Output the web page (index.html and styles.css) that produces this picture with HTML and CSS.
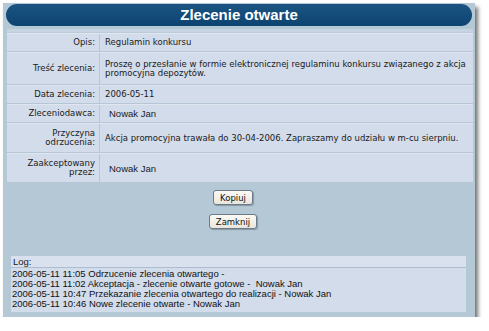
FILE: index.html
```html
<!DOCTYPE html>
<html lang="pl">
<head>
    <meta charset="UTF-8">
    <meta name="viewport" content="width=device-width, initial-scale=1.0">
    <title>Zlecenie otwarte</title>
    <link rel="stylesheet" href="styles.css">
</head>

<body>
    <div class="panel">
        <h1 class="title">Zlecenie otwarte</h1>

        <div class="details">
            <div class="row row-short">
                <div class="label">Opis:</div>
                <div class="value">Regulamin konkursu</div>
            </div>
            <div class="row row-tall">
                <div class="label">Treść zlecenia:</div>
                <div class="value">Proszę o przesłanie w formie elektronicznej regulaminu konkursu związanego z akcja promocyjna depozytów.</div>
            </div>
            <div class="row row-short">
                <div class="label">Data zlecenia:</div>
                <div class="value">2006-05-11</div>
            </div>
            <div class="row row-short">
                <div class="label">Zleceniodawca:</div>
                <div class="value person">Nowak Jan</div>
            </div>
            <div class="row row-mid">
                <div class="label">Przyczyna<br>odrzucenia:</div>
                <div class="value">Akcja promocyjna trawała do 30-04-2006. Zapraszamy do udziału w m-cu sierpniu.</div>
            </div>
            <div class="row row-mid">
                <div class="label">Zaakceptowany<br>przez:</div>
                <div class="value person">Nowak Jan</div>
            </div>
        </div>

        <div class="actions">
            <button type="button" class="btn">Kopiuj</button>
            <button type="button" class="btn">Zamknij</button>
        </div>

        <div class="log">
            <div class="log-head">Log:</div>
            <div class="log-body">
                <div>2006-05-11 11:05 Odrzucenie zlecenia otwartego -</div>
                <div>2006-05-11 11:02 Akceptacja - zlecenie otwarte gotowe -&nbsp; Nowak Jan</div>
                <div>2006-05-11 10:47 Przekazanie zlecenia otwartego do realizacji - Nowak Jan</div>
                <div>2006-05-11 10:46 Nowe zlecenie otwarte - Nowak Jan</div>
            </div>
        </div>
    </div>
</body>
</html>
```

FILE: styles.css
```css
body {
    margin: 0;
    padding: 3px 0 0 3px;
    background: #fff;
    font-family: "DejaVu Sans", Verdana, sans-serif;
    font-size: 8.5px;
    color: #1a1a1a;
}

.panel {
    width: 472px;
    height: 314px;
    background: #b5c8d6;
    box-shadow: 3px 4px 4px rgba(0, 0, 0, 0.55);
    display: flex;
    flex-direction: column;
}

.title {
    margin: 1px 3px 0 3px;
    height: 22px;
    line-height: 22px;
    border-radius: 11px;
    background: linear-gradient(to bottom, #1b5482, #0d4371);
    color: #fff;
    font-family: "Liberation Sans", Arial, sans-serif;
    font-size: 15px;
    font-weight: bold;
    text-align: center;
}

.details {
    margin: 3px 2px 0 4px;
    border-top: 3px solid #c6d4e1;
    padding-top: 1px;
    background: #bccbd9;
}

.row {
    display: grid;
    grid-template-columns: 93px 1fr;
    border-top: 1px solid #dfe6f0;
    border-bottom: 1px solid #b6c6d6;
}

.row-short { height: 17px; }
.row-mid { height: 28px; }
.row-tall { height: 31px; }

.label,
.value {
    display: flex;
    align-items: center;
    background: #d3dcea;
    line-height: 9px;
}

.label {
    justify-content: flex-end;
    text-align: right;
    padding-right: 4px;
    border-right: 1px solid #b6c6d6;
}

.value {
    padding-left: 5px;
    padding-right: 6px;
}

.person {
    padding-left: 9px;
    font-family: "Liberation Sans", Arial, sans-serif;
    font-size: 9.5px;
}

.actions {
    display: flex;
    flex-direction: column;
    align-items: center;
    gap: 9px;
    padding: 7px 12px 0 0;
}

.btn {
    height: 15px;
    padding: 0 6px;
    font-family: "DejaVu Sans", Verdana, sans-serif;
    font-size: 8.5px;
    color: #111;
    background: linear-gradient(to bottom, #fbfaf5, #e8e6dc);
    border: 1px solid #6d7b88;
    border-radius: 3px;
    box-shadow: 1px 1px 1px rgba(0, 0, 0, 0.25);
}

.log {
    margin: auto 9px 5px 8px;
    background: #d3dcea;
    font-family: "Liberation Sans", Arial, sans-serif;
    font-size: 9.5px;
}

.log-head {
    height: 11px;
    line-height: 12px;
    padding-left: 2px;
    background: #d9e1ee;
    border-bottom: 1px solid #aebdcd;
}

.log-body {
    padding: 1px 0 3px 1px;
    line-height: 10px;
    color: #111;
}
```
